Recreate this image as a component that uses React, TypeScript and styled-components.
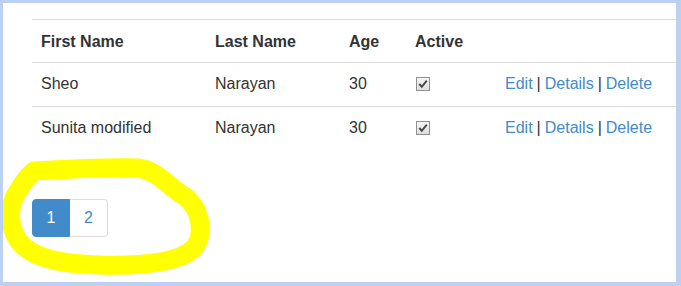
import React from "react";
import styled, { createGlobalStyle } from "styled-components";

type Person = {
  first: string;
  last: string;
  age: number;
  active: boolean;
};

const people: Person[] = [
  { first: "Sheo", last: "Narayan", age: 30, active: true },
  { first: "Sunita modified", last: "Narayan", age: 30, active: true },
];

const GlobalStyle = createGlobalStyle`
  body {
    margin: 0;
    font-family: "Liberation Sans", Arial, sans-serif;
    color: #333333;
    background: #ffffff;
  }
`;

const Frame = styled.div`
  position: relative;
  box-sizing: border-box;
  width: 681px;
  height: 286px;
  border: 3px solid #bcd1f1;
  border-right-width: 5px;
  border-bottom-width: 4px;
  padding: 16px 0 0 29px;
  background: #ffffff;
  overflow: hidden;
`;

const Table = styled.table`
  width: 100%;
  border-collapse: collapse;
  table-layout: fixed;
  border-top: 1px solid #dddddd;
  font-size: 16px;
`;

const Th = styled.th`
  text-align: left;
  font-weight: bold;
  line-height: 22px;
  padding: 11px 9px 9px;
  border-bottom: 1px solid #dddddd;
  color: #333333;
`;

const Td = styled.td`
  line-height: 22px;
  padding: 10px 9px 11px;
  border-top: 1px solid #dddddd;
  vertical-align: middle;
  white-space: nowrap;
`;

const Row = styled.tr`
  &:first-child td {
    border-top: none;
  }
`;

const Check = styled.span`
  display: inline-block;
  box-sizing: border-box;
  width: 14px;
  height: 14px;
  margin-left: 1px;
  vertical-align: middle;
  border: 1px solid #8f8f8f;
  background: linear-gradient(#f6f6f6, #dedede);
  position: relative;
  top: -1px;

  svg {
    display: block;
  }
`;

const ActionLink = styled.a`
  color: #428bca;
  text-decoration: none;
  cursor: pointer;
`;

const Sep = styled.span`
  color: #333333;
  margin: 0 4px;
`;

const Pager = styled.div`
  display: flex;
  margin-top: 49px;
  font-size: 16px;
`;

const PageLink = styled.a<{ $active?: boolean }>`
  box-sizing: border-box;
  width: 38px;
  height: 38px;
  display: flex;
  align-items: center;
  justify-content: center;
  color: ${(p) => (p.$active ? "#ffffff" : "#428bca")};
  background: ${(p) => (p.$active ? "#428bca" : "#ffffff")};
  border: 1px solid ${(p) => (p.$active ? "#428bca" : "#dddddd")};
  &:first-child {
    border-radius: 4px 0 0 4px;
  }
  &:last-child {
    border-radius: 0 4px 4px 0;
    border-left: none;
  }
`;

const Scribble = styled.svg`
  position: absolute;
  top: -3px;
  left: -3px;
  width: 681px;
  height: 286px;
  pointer-events: none;
`;

const CheckBox = () => (
  <Check>
    <svg width="12" height="12" viewBox="0 0 12 12">
      <path
        d="M2.2 6 L4.8 8.8 L9.8 2.6"
        fill="none"
        stroke="#4a4a4a"
        strokeWidth="2"
      />
    </svg>
  </Check>
);

const App = () => {
  return (
    <>
      <GlobalStyle />
      <Frame>
        <Table>
          <colgroup>
            <col style={{ width: 174 }} />
            <col style={{ width: 134 }} />
            <col style={{ width: 66 }} />
            <col style={{ width: 90 }} />
            <col />
          </colgroup>
          <thead>
            <tr>
              <Th>First Name</Th>
              <Th>Last Name</Th>
              <Th>Age</Th>
              <Th>Active</Th>
              <Th></Th>
            </tr>
          </thead>
          <tbody>
            {people.map((p, i) => (
              <Row key={i}>
                <Td>{p.first}</Td>
                <Td>{p.last}</Td>
                <Td>{p.age}</Td>
                <Td>{p.active && <CheckBox />}</Td>
                <Td>
                  <ActionLink>Edit</ActionLink>
                  <Sep>|</Sep>
                  <ActionLink>Details</ActionLink>
                  <Sep>|</Sep>
                  <ActionLink>Delete</ActionLink>
                </Td>
              </Row>
            ))}
          </tbody>
        </Table>
        <Pager>
          <PageLink $active>1</PageLink>
          <PageLink>2</PageLink>
        </Pager>
        <Scribble viewBox="0 0 681 286">
          <path
            d="M34 171 C70 169 110 167 138 168 C156 170 166 184 181 194 C201 205 206 235 193 249 C178 263 140 266 100 265 C60 264 30 258 18 240 C8 225 8 205 18 191 C24 181 29 175 34 171 Z"
            fill="none"
            stroke="#ffff00"
            strokeWidth="19"
            strokeLinecap="round"
            strokeLinejoin="round"
          />
        </Scribble>
      </Frame>
    </>
  );
};

export default App;
